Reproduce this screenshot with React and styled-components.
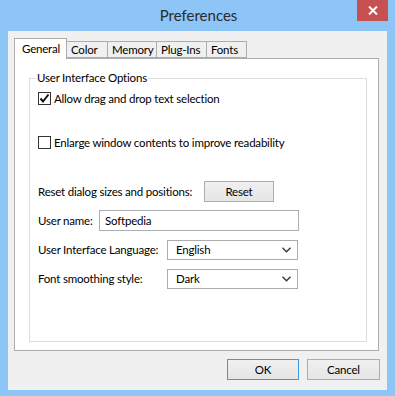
import React from 'react';
import styled, { createGlobalStyle } from 'styled-components';

const GlobalStyle = createGlobalStyle`
  html, body {
    margin: 0;
    padding: 0;
    background: #8cc5f6;
  }
  body {
    font-family: Lato, "Liberation Sans", Arial, sans-serif;
    font-size: 11.5px;
    letter-spacing: -0.2px;
    color: #000;
  }
`;

const Window = styled.div`
  width: 395px;
  height: 396px;
  box-sizing: border-box;
  background: #8cc5f6;
  padding: 0 8px 6px 8px;
  display: flex;
  flex-direction: column;
`;

const TitleBar = styled.div`
  height: 31px;
  display: grid;
  grid-template-columns: 30px 1fr 30px;
  align-items: start;
`;

const Title = styled.div`
  grid-column: 2;
  text-align: center;
  font-size: 15px;
  letter-spacing: 0;
  line-height: 31px;
  color: #2b2b2b;
  padding-left: 2px;
`;

const CloseButton = styled.div`
  grid-column: 3;
  width: 31px;
  height: 21px;
  background: #c75050;
  display: flex;
  align-items: center;
  justify-content: center;
`;

const Client = styled.div`
  flex: 1;
  background: #f0f0f0;
  padding: 7px 8px 10px 6px;
  display: flex;
  flex-direction: column;
`;

const TabStrip = styled.div`
  display: flex;
  align-items: flex-end;
  height: 20px;
  position: relative;
  z-index: 1;
`;

const Tab = styled.div`
  box-sizing: border-box;
  width: ${(p) => p.$width}px;
  height: ${(p) => (p.$active ? 21 : 17)}px;
  margin-bottom: ${(p) => (p.$active ? -1 : 0)}px;
  margin-left: ${(p) => (p.$first ? 0 : -1)}px;
  border: 1px solid #adadad;
  border-bottom: ${(p) => (p.$active ? 'none' : '1px solid #adadad')};
  background: ${(p) => (p.$active ? '#fff' : '#f0f0f0')};
  padding-left: ${(p) => (p.$active ? 7 : 4)}px;
  padding-top: ${(p) => (p.$active ? 3 : 1)}px;
  line-height: 14px;
  color: #000;
  white-space: nowrap;
`;

const Panel = styled.div`
  flex: 1;
  background: #fff;
  border: 1px solid #adadad;
  padding: 12px 11px 8px 14px;
  display: flex;
  flex-direction: column;
`;

const Group = styled.fieldset`
  flex: 1;
  margin: 0;
  border: 1px solid #dcdcdc;
  padding: 0 8px 0 8px;
  display: flex;
  flex-direction: column;
  min-width: 0;
`;

const Legend = styled.legend`
  padding: 0 1px;
  margin-left: -2px;
  line-height: 14px;
`;

const CheckRow = styled.label`
  display: flex;
  align-items: center;
  gap: 3px;
  height: 20px;
  margin-top: ${(p) => p.$top}px;
`;

const Box = styled.span`
  box-sizing: border-box;
  width: 13px;
  height: 13px;
  border: 1px solid #333;
  background: #fff;
  display: flex;
  align-items: center;
  justify-content: center;
`;

const Rows = styled.div`
  display: flex;
  flex-direction: column;
  gap: 8px;
  margin-top: 29px;
`;

const FormRow = styled.div`
  display: flex;
  align-items: center;
  height: 21px;
`;

const Label = styled.span`
  width: ${(p) => p.$width}px;
  flex-shrink: 0;
  white-space: nowrap;
`;

const PushButton = styled.div`
  box-sizing: border-box;
  width: ${(p) => p.$width}px;
  height: 21px;
  border: 1px solid ${(p) => (p.$default ? '#3c9be6' : '#adadad')};
  background: linear-gradient(#f0f0f0, #e5e5e5);
  display: flex;
  align-items: center;
  justify-content: center;
  color: #000;
`;

const TextInput = styled.div`
  box-sizing: border-box;
  width: 200px;
  height: 21px;
  border: 1px solid #abadb3;
  background: #fff;
  padding-left: 5px;
  display: flex;
  align-items: center;
`;

const Select = styled.div`
  box-sizing: border-box;
  width: 131px;
  height: 20px;
  border: 1px solid #acacac;
  background: #fff;
  padding: 0 6px 0 8px;
  display: flex;
  align-items: center;
  justify-content: space-between;
`;

const Footer = styled.div`
  display: flex;
  justify-content: flex-end;
  gap: 8px;
  margin-top: 8px;
  margin-right: -1px;
`;

const Chevron = () => (
  <svg width="9" height="6" viewBox="0 0 9 6">
    <polyline points="0.5,0.8 4.5,4.8 8.5,0.8" fill="none" stroke="#333" strokeWidth="1.3" />
  </svg>
);

const Check = () => (
  <svg width="11" height="11" viewBox="0 0 11 11">
    <polyline points="1.5,5.5 4,8.5 9.5,1.5" fill="none" stroke="#111" strokeWidth="2" />
  </svg>
);

const tabs = [
  { name: 'General', width: 53, active: true },
  { name: 'Color', width: 42 },
  { name: 'Memory', width: 50 },
  { name: 'Plug-Ins', width: 51 },
  { name: 'Fonts', width: 41 },
];

const App = () => (
  <>
    <GlobalStyle />
    <Window>
      <TitleBar>
        <Title>Preferences</Title>
        <CloseButton>
          <svg width="10" height="9" viewBox="0 0 10 9">
            <path d="M1 0.5 L9 8.5 M9 0.5 L1 8.5" stroke="#fff" strokeWidth="2" />
          </svg>
        </CloseButton>
      </TitleBar>
      <Client>
        <TabStrip>
          {tabs.map((t, i) => (
            <Tab key={t.name} $width={t.width} $active={t.active} $first={i === 0}>
              {t.name}
            </Tab>
          ))}
        </TabStrip>
        <Panel>
          <Group>
            <Legend>User Interface Options</Legend>
            <CheckRow $top={3}>
              <Box><Check /></Box>
              Allow drag and drop text selection
            </CheckRow>
            <CheckRow $top={24}>
              <Box />
              Enlarge window contents to improve readability
            </CheckRow>
            <Rows>
              <FormRow>
                <Label $width={166}>Reset dialog sizes and positions:</Label>
                <PushButton $width={70}>Reset</PushButton>
              </FormRow>
              <FormRow>
                <Label $width={61}>User name:</Label>
                <TextInput>Softpedia</TextInput>
              </FormRow>
              <FormRow>
                <Label $width={129}>User Interface Language:</Label>
                <Select>English<Chevron /></Select>
              </FormRow>
              <FormRow>
                <Label $width={129}>Font smoothing style:</Label>
                <Select>Dark<Chevron /></Select>
              </FormRow>
            </Rows>
          </Group>
        </Panel>
        <Footer>
          <PushButton $width={72} $default>OK</PushButton>
          <PushButton $width={73}>Cancel</PushButton>
        </Footer>
      </Client>
    </Window>
  </>
);

export default App;
